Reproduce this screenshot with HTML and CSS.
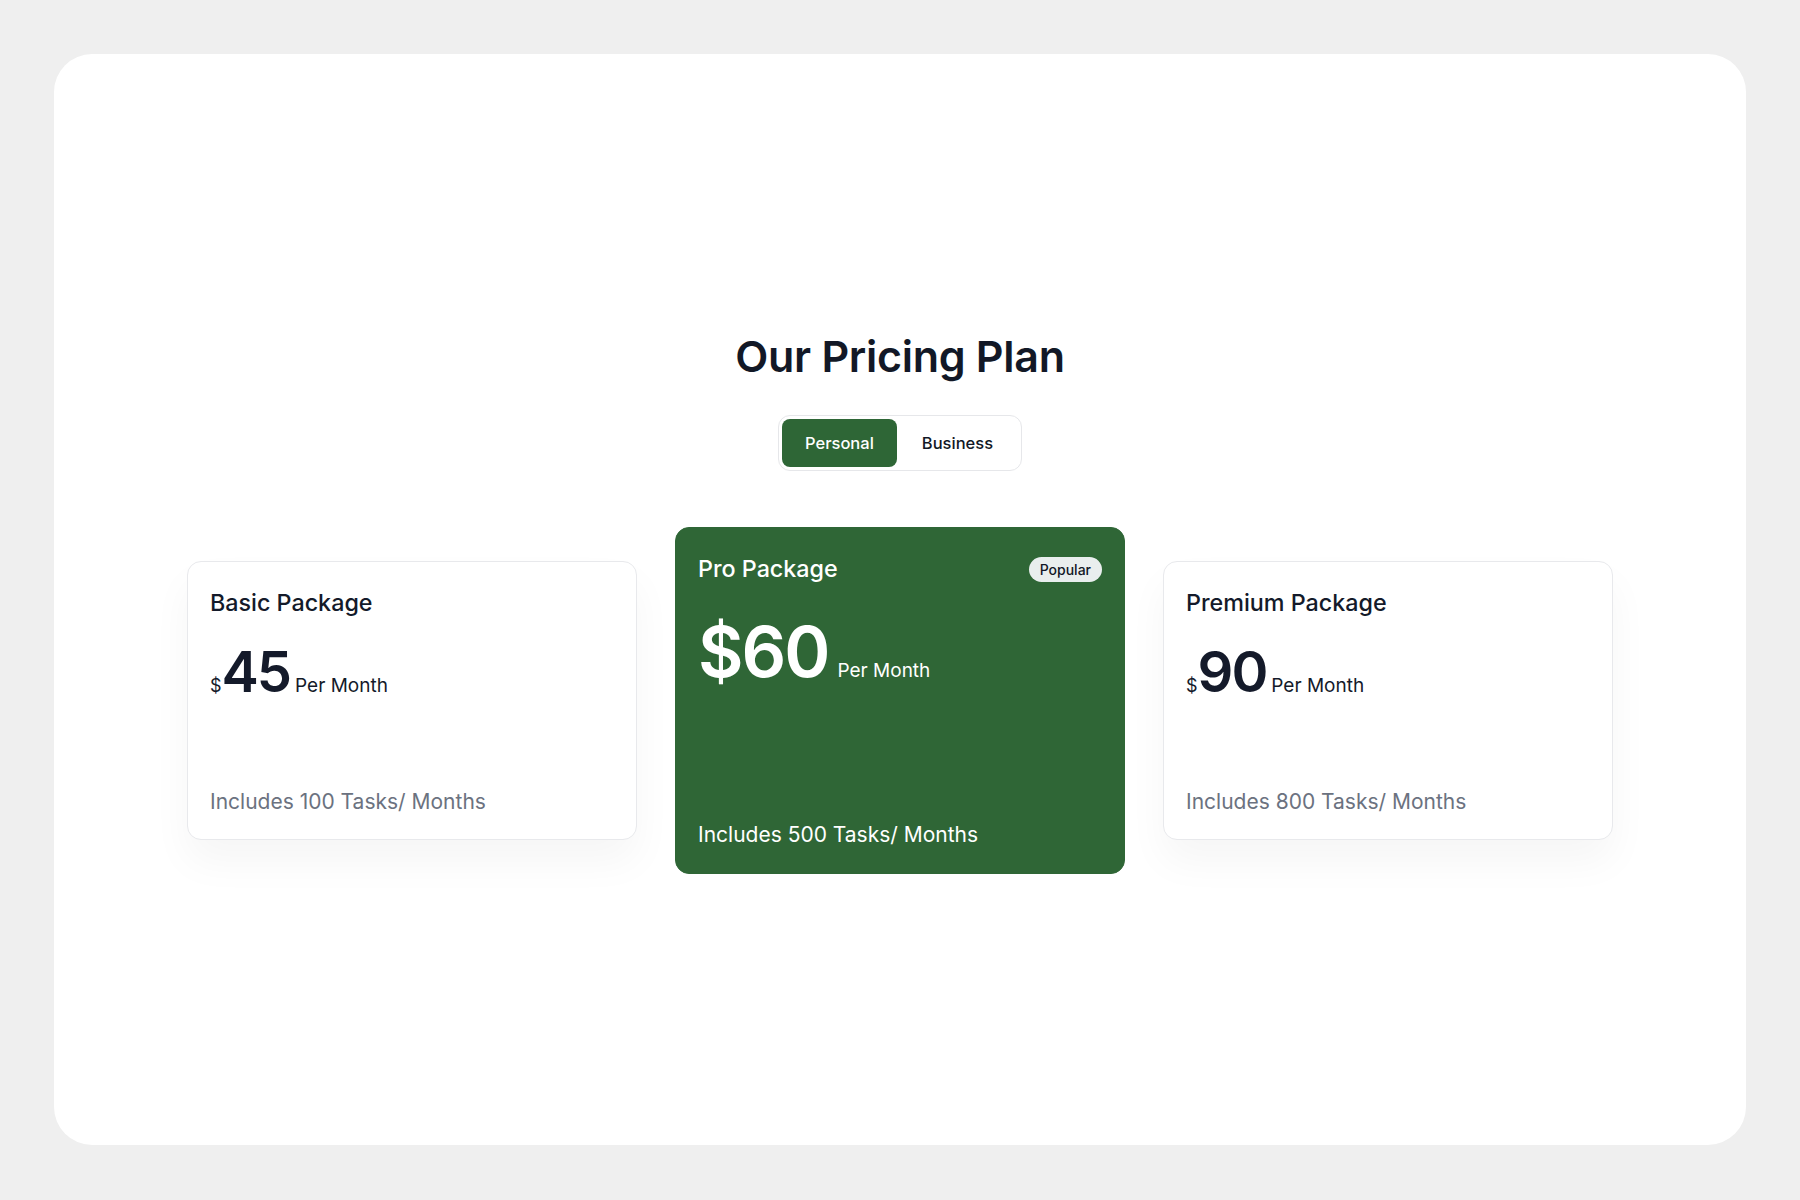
FILE: index.html
```html
<!DOCTYPE html>
<html lang="en">
<head>
<meta charset="utf-8">
<title>Our Pricing Plan</title>
<link rel="stylesheet" href="styles.css">
</head>
<body>
<main class="frame">
  <section class="pricing">
    <h1 class="heading">Our Pricing Plan</h1>
    <div class="toggle">
      <button class="toggle-btn active">Personal</button>
      <button class="toggle-btn">Business</button>
    </div>
    <div class="plans">
      <article class="plan">
        <h2 class="plan-name">Basic Package</h2>
        <div class="price"><span class="cur">$</span><span class="amount">45</span><span class="per">Per Month</span></div>
        <p class="includes">Includes 100 Tasks/ Months</p>
      </article>
      <article class="plan featured">
        <div class="plan-head">
          <h2 class="plan-name">Pro Package</h2>
          <span class="badge">Popular</span>
        </div>
        <div class="price"><span class="amount">$60</span><span class="per">Per Month</span></div>
        <p class="includes">Includes 500 Tasks/ Months</p>
      </article>
      <article class="plan">
        <h2 class="plan-name">Premium Package</h2>
        <div class="price"><span class="cur">$</span><span class="amount">90</span><span class="per">Per Month</span></div>
        <p class="includes">Includes 800 Tasks/ Months</p>
      </article>
    </div>
  </section>
</main>
</body>
</html>
```
FILE: styles.css
```css
* { box-sizing: border-box; }
html, body { margin: 0; padding: 0; }
body {
  background: #efefef;
  font-family: Inter, "Noto Sans", sans-serif;
  color: #111827;
  width: 1800px;
  height: 1200px;
  padding: 54px;
}
.frame {
  background: #ffffff;
  border-radius: 38px;
  height: 1091px;
  display: flex;
  align-items: center;
  justify-content: center;
  padding-top: 6px;
}
.pricing {
  display: flex;
  flex-direction: column;
  align-items: center;
}
.heading {
  margin: 0;
  font-size: 43px;
  line-height: 50px;
  font-weight: 600;
  letter-spacing: -0.3px;
  color: #121826;
}
.toggle {
  margin-top: 34px;
  display: flex;
  padding: 3px;
  border: 1px solid #e6e7ea;
  border-radius: 12px;
  background: #fff;
}
.toggle-btn {
  font-family: inherit;
  font-size: 16.5px;
  font-weight: 500;
  height: 48px;
  padding: 0 25px;
  border: 0;
  background: transparent;
  color: #121826;
  border-radius: 8px;
}
.toggle-btn.active {
  background: #2e6636;
  color: #ffffff;
  padding: 0 23px;
}
.plans {
  margin-top: 56px;
  display: flex;
  align-items: center;
  gap: 38px;
}
.plan {
  width: 450px;
  height: 279px;
  background: #fff;
  border: 1px solid #e8e9ec;
  border-radius: 14px;
  padding: 23px 22px 0;
  display: flex;
  flex-direction: column;
  box-shadow: 0 22px 40px rgba(0, 0, 0, 0.04);
}
.plan-name {
  margin: 0;
  font-size: 23.3px;
  line-height: 36px;
  font-weight: 500;
  color: #141a2a;
}
.plan-head {
  display: flex;
  justify-content: space-between;
  align-items: center;
}
.badge {
  background: #e9eeee;
  color: #121826;
  font-size: 14px;
  font-weight: 500;
  height: 25px;
  line-height: 25px;
  padding: 0 11px;
  border-radius: 13px;
}
.price {
  margin-top: 19px;
  display: flex;
  align-items: baseline;
  color: #141a2a;
}
.cur {
  font-size: 18px;
}
.amount {
  font-size: 56px;
  line-height: 64px;
  font-weight: 600;
  letter-spacing: -2px;
}
.per {
  font-size: 19px;
  margin-left: 5px;
}
.includes {
  margin: auto 0 23px;
  font-size: 21px;
  line-height: 28px;
  color: #6b7280;
}
.plan.featured {
  height: 347px;
  background: #2f6636;
  border-color: #2f6636;
  box-shadow: none;
  color: #fff;
}
.featured .plan-name,
.featured .price,
.featured .includes { color: #ffffff; }
.featured .price { margin-top: 25px; }
.featured .amount {
  font-size: 70px;
  line-height: 80px;
  font-weight: 600;
  letter-spacing: -2px;
}
.featured .per { margin-left: 9px; }
.featured .includes { margin-bottom: 24px; }
```
